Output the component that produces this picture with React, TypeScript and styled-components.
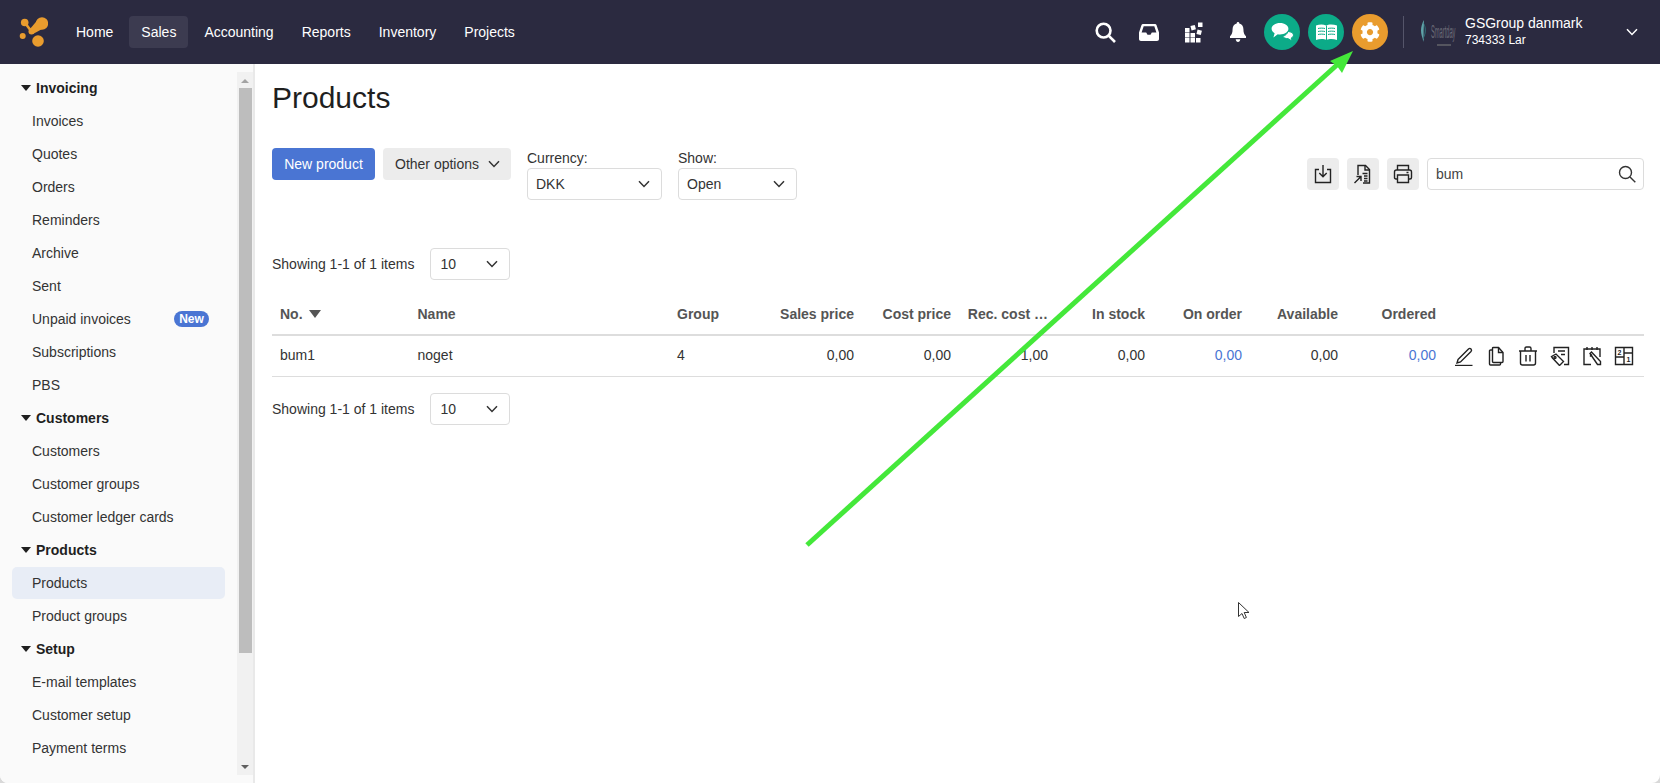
import styled, { createGlobalStyle } from "styled-components";
import { FaCog } from "react-icons/fa";

const GlobalStyle = createGlobalStyle`
  html, body {
    margin: 0;
    height: 100%;
    background: #d9d9d9;
    overflow: hidden;
  }
  body, button {
    font-family: "Liberation Sans", Arial, sans-serif;
    font-size: 14px;
    color: #333;
  }
`;

const COLUMNS = "137.5px 259.5px 96px 97px 97px 97px 97px 97px 96px 98px 1fr";

const navItems = ["Home", "Sales", "Accounting", "Reports", "Inventory", "Projects"];

const sideGroups = [
  {
    title: "Invoicing",
    items: ["Invoices", "Quotes", "Orders", "Reminders", "Archive", "Sent", "Unpaid invoices", "Subscriptions", "PBS"],
  },
  { title: "Customers", items: ["Customers", "Customer groups", "Customer ledger cards"] },
  { title: "Products", items: ["Products", "Product groups"] },
  { title: "Setup", items: ["E-mail templates", "Customer setup", "Payment terms"] },
];

const Chevron = ({ color = "#333" }: { color?: string }) => (
  <svg width="12" height="8" viewBox="0 0 12 8" fill="none">
    <path d="M1 1.2 6 6.4l5-5.2" stroke={color} strokeWidth="1.5" />
  </svg>
);

const Logo = () => (
  <svg width="30" height="30" viewBox="0 0 30 30" style={{ display: "block" }}>
    <g fill="#e99c2e">
      <circle cx="6.700" cy="5.500" r="3.800" />
      <circle cx="24" cy="6.500" r="6.200" />
      <circle cx="4.700" cy="19" r="3" />
      <circle cx="20" cy="24" r="5.800" />
      <circle cx="13.500" cy="14.500" r="3" />
      <path d="M6.700 5.500 13.500 14.500" stroke="#e99c2e" strokeWidth="2.600" />
      <path d="M20 2.500 26 11 15 17 11.500 12.500Z" />
    </g>
  </svg>
);

const SearchGlyph = () => (
  <svg width="21" height="21" viewBox="0 0 21 21" fill="none" stroke="#fff">
    <circle cx="8.600" cy="8.600" r="6.900" strokeWidth="2.600" />
    <path d="m13.600 13.600 6.400 6.400" strokeWidth="2.600" />
  </svg>
);

const InboxGlyph = () => (
  <svg width="20" height="17" viewBox="0 0 20 17">
    <path
      fill="#fff"
      fillRule="evenodd"
      d="M4 0h12c.8 0 1.200.4 1.500 1L20 8.500V15c0 1.200-.8 2-2 2H2c-1.200 0-2-.8-2-2V8.500L2.500 1C2.800.4 3.200 0 4 0Zm.7 2.200L2.600 8.400h4.600l1.300 2.300h3l1.300-2.300h4.600l-2.100-6.200Z"
    />
  </svg>
);

const BlocksGlyph = () => (
  <svg width="18" height="21" viewBox="0 0 18 21" fill="#fff">
    <rect x="0" y="6" width="4.500" height="4.500" />
    <rect x="0" y="11" width="4.500" height="4.500" />
    <rect x="5.500" y="11" width="4.500" height="4.500" />
    <rect x="0" y="16" width="4.500" height="4.500" />
    <rect x="5.500" y="16" width="4.500" height="4.500" />
    <rect x="11" y="16" width="4.500" height="4.500" />
    <rect x="6" y="3.500" width="4.500" height="4.500" transform="rotate(-15 8 6)" />
    <rect x="13" y="0.500" width="4.500" height="4.500" />
    <rect x="12" y="8" width="4.500" height="4.500" transform="rotate(15 14 10)" />
  </svg>
);

const BellGlyph = () => (
  <svg width="16" height="20" viewBox="0 0 16 20" fill="#fff">
    <path d="M8 0c.8 0 1.300.6 1.300 1.400C12 2 13.400 4.300 13.400 7c0 4 .9 5.500 2.600 7.300V16H0v-1.700C1.700 12.500 2.600 11 2.600 7c0-2.700 1.400-5 4.100-5.600C6.700.6 7.200 0 8 0Z" />
    <path d="M5.700 17.300h4.600C10.200 18.800 9.200 20 8 20s-2.200-1.200-2.300-2.700Z" />
  </svg>
);

const ChatGlyph = () => (
  <svg width="23" height="20" viewBox="0 0 23 20" fill="#fff">
    <path d="M9 1c4.700 0 8.400 2.500 8.400 5.800S13.700 12.500 9 12.500c-.8 0-1.500 0-2.200-.2L2.400 15.500l1.200-4.300C1.800 10.100.6 8.600.6 6.800.6 3.500 4.300 1 9 1Z" />
    <path
      stroke="#0cab88"
      strokeWidth="1"
      d="M17 9.500c3 .2 5.500 1.500 5.500 3.500 0 1.300-.9 2.300-2.300 3l1 3-4-2.300c-2.600 0-4.700-.9-5.400-2.400 2.400-.6 4.400-2.300 5.200-4.800Z"
    />
  </svg>
);

const BookGlyph = () => (
  <svg width="21" height="16" viewBox="0 0 21 16">
    <path fill="#fff" d="M0 1.500C3.500 0 7.500 0 10 1.500 12.500 0 17.500 0 21 1.500V16c-3.500-1.300-8-1.300-10.500 0-2.500-1.300-7-1.300-10.500 0Z" />
    <path
      fill="none"
      stroke="#0cab88"
      strokeWidth="1"
      d="M10.500 1.500V16M2 4.500c2.200-.5 4.800-.5 7 0M2 7.500c2.200-.5 4.800-.5 7 0M2 10.500c2.200-.5 4.800-.5 7 0M12 4.500c2.200-.5 4.800-.5 7 0M12 7.500c2.200-.5 4.800-.5 7 0M12 10.500c2.200-.5 4.800-.5 7 0"
    />
  </svg>
);

const CompanyLogo = () => (
  <svg width="38" height="36" viewBox="0 0 38 36">
    <g transform="translate(0 5)">
      <path d="M5 1C1 8 1 14 5 23 4 15 5 8 5 1Z" fill="#5fa3a8" />
      <path d="M4 3C7 9 6 16 3 22 8 15 8 8 4 3Z" fill="#2f6f78" />
    </g>
    <text x="0" y="0" fill="#6c6c78" fontSize="11" transform="translate(12 24) scale(.52 1.600)">
      Smartday
    </text>
    <rect x="18" y="30" width="14" height="2" fill="#55555f" />
  </svg>
);

const ToolIcon = styled.svg`
  width: 20px;
  height: 20px;
  display: block;
  fill: none;
  stroke: #222;
  stroke-width: 1.4;
`;

const DownloadIcon = () => (
  <ToolIcon viewBox="0 0 20 20">
    <path d="M6 5.500H2.500v13h15v-13H14" />
    <path d="M10 1v11.500M6.300 9 10 12.800 13.700 9" />
  </ToolIcon>
);

const ExportIcon = () => (
  <ToolIcon viewBox="0 0 20 20">
    <path d="M5 11V1.500h7.500l4 4V19H10" />
    <path d="M12 1.500V6h4.500" />
    <path d="M9.500 9.500h5M11 12h3.500M11 14.500h3.500M11 17h3.500" />
    <path d="M1.500 19 8 12.500M3.500 12.500H8V17" />
  </ToolIcon>
);

const PrintIcon = () => (
  <ToolIcon viewBox="0 0 20 20">
    <path d="M4.500 6V1.500h11V6" />
    <path d="M4.500 15H3c-1 0-1.500-.5-1.500-1.500V8c0-1.300.7-2 2-2h13c1.300 0 2 .7 2 2v5.500c0 1-.5 1.500-1.500 1.500h-1.500" />
    <path d="M4.500 11h11v7.500h-11zM13.500 8.500h2" />
  </ToolIcon>
);

const PencilIcon = () => (
  <ToolIcon viewBox="0 0 20 20">
    <path d="M4 13.500 14.500 3c.8-.8 1.800-.8 2.500 0s.7 1.700 0 2.500L6.500 16l-3.500 1z" />
    <path d="M1 19.500h17.500" />
  </ToolIcon>
);

const CopyIcon = () => (
  <ToolIcon viewBox="0 0 20 20">
    <path d="M6.500 2v13.500c0 .6.400 1 1 1H16c.6 0 1-.4 1-1V6.500L12.500 1.500h-5c-.6 0-1 .2-1 .5Z" />
    <path d="M12.500 1.500v5H17" />
    <path d="M6.500 4H4.500c-.6 0-1 .4-1 1v13c0 .6.400 1 1 1h9c.6 0 1-.4 1-1v-1.500" />
  </ToolIcon>
);

const TrashIcon = () => (
  <ToolIcon viewBox="0 0 20 20">
    <path d="M1 5h18M7 5V2.500C7 1.500 7.600 1 8.500 1h3c.9 0 1.500.5 1.500 1.500V5" />
    <path d="M2.500 5v12c0 1.300.8 2 2 2h11c1.200 0 2-.7 2-2V5" />
    <path d="M8 9v6.500M12 9v6.500" />
  </ToolIcon>
);

const TagDocIcon = () => (
  <ToolIcon viewBox="0 0 20 20">
    <path d="M4 7V1.500h14.500v17H14" />
    <path d="M8 5h7M11 8.500h4" />
    <path d="M1.500 10.500 6 8l7.500 7.500-4 4-7-7.500Z" />
    <circle cx="5" cy="11.500" r="1" />
  </ToolIcon>
);

const CalendarEditIcon = () => (
  <ToolIcon viewBox="0 0 20 20">
    <path d="M9 18.500H2V3h16v8" />
    <path d="M5 1v3M10 1v3M15 1v3" />
    <path d="M8 7.500 9.500 6l9 9.500v3h-3z" />
    <path d="m10 8.500-2 2" />
  </ToolIcon>
);

const NumberGrid = styled.text`
  font-size: 7px;
  font-weight: 700;
  fill: #222;
  stroke: none;
  font-family: "Liberation Sans", Arial, sans-serif;
`;

const GridIcon = () => (
  <ToolIcon viewBox="0 0 20 20">
    <path d="M1.500 1.500h17v17h-17zM10 1.500v17M1.500 11h8.500M10 7h8.500" />
    <NumberGrid x="3.400" y="8.600">2</NumberGrid>
    <NumberGrid x="12.400" y="16">1</NumberGrid>
  </ToolIcon>
);

const Page = styled.div`
  position: relative;
  height: 783px;
  display: flex;
  flex-direction: column;
  background: #fff;
  border-radius: 0 0 8px 8px;
  overflow: hidden;
`;

const TopBar = styled.header`
  flex: none;
  height: 64px;
  display: flex;
  align-items: center;
  background: #2b2a40;
  color: #fff;
`;

const LogoBox = styled.div`
  width: 30px;
  margin: 0 16px 0 18px;
`;

const TopNav = styled.nav`
  display: flex;
  align-items: center;
`;

const TopLink = styled.a<{ $active?: boolean }>`
  height: 32px;
  display: flex;
  align-items: center;
  padding: 0 12px;
  margin-right: 4px;
  border-radius: 4px;
  color: #fff;
  background: ${(p) => (p.$active ? "#3c3b50" : "transparent")};
`;

const TopRight = styled.div`
  margin-left: auto;
  display: flex;
  align-items: center;
`;

const GlyphBox = styled.div<{ $width: number; $gap?: number }>`
  width: ${(p) => p.$width}px;
  margin-right: ${(p) => p.$gap ?? 0}px;
  display: flex;
  justify-content: center;
  align-items: center;
`;

const RoundButton = styled.div<{ $color: string }>`
  width: 36px;
  height: 36px;
  border-radius: 50%;
  display: flex;
  align-items: center;
  justify-content: center;
  margin-right: 8px;
  background: ${(p) => p.$color};
`;

const Divider = styled.div`
  width: 1px;
  height: 32px;
  margin: 0 15px 0 7px;
  background: #55556a;
`;

const Company = styled.div`
  margin-left: 8px;
  display: flex;
  flex-direction: column;
  width: 161px;
  color: #fff;
`;

const CompanyName = styled.span`
  font-size: 14px;
  line-height: 17px;
`;

const CompanyUser = styled.span`
  font-size: 12px;
  line-height: 17px;
`;

const ChevronBox = styled.div`
  margin-right: 22px;
  display: flex;
`;

const Body = styled.div`
  flex: 1;
  display: flex;
  min-height: 0;
`;

const Sidebar = styled.aside`
  flex: none;
  width: 255px;
  box-sizing: border-box;
  padding: 8px 0;
  display: flex;
  background: #fafafa;
  border-right: 2px solid #e9e9e9;
`;

const SideNav = styled.nav`
  flex: 1;
  min-width: 0;
  overflow: hidden;
  margin-top: -1px;
`;

const GroupTitle = styled.div`
  height: 33px;
  display: flex;
  align-items: center;
  padding-left: 21px;
  gap: 5px;
  font-weight: 700;
  color: #1f1f1f;
`;

const Caret = styled.span`
  width: 0;
  height: 0;
  border-left: 5px solid transparent;
  border-right: 5px solid transparent;
  border-top: 6px solid #1f1f1f;
`;

const SideItemRow = styled.div`
  height: 33px;
  display: flex;
  align-items: center;
  padding: 0 12px;
`;

const SideItem = styled.a<{ $active?: boolean }>`
  flex: 1;
  height: 32px;
  display: flex;
  align-items: center;
  justify-content: space-between;
  padding: 0 16px 0 20px;
  border-radius: 5px;
  color: #333;
  background: ${(p) => (p.$active ? "#e8edf6" : "transparent")};
`;

const NewBadge = styled.span`
  width: 35px;
  height: 16px;
  border-radius: 8px;
  display: flex;
  align-items: center;
  justify-content: center;
  font-size: 12px;
  font-weight: 700;
  color: #fff;
  background: #4a75d3;
`;

const ScrollTrack = styled.div`
  flex: none;
  width: 16px;
  display: flex;
  flex-direction: column;
  align-items: center;
  background: #f1f1f1;
`;

const ScrollArrow = styled.span<{ $down?: boolean }>`
  flex: none;
  width: 0;
  height: 0;
  margin: ${(p) => (p.$down ? "auto 0 6px" : "7px 0 5px")};
  border-left: 4px solid transparent;
  border-right: 4px solid transparent;
  ${(p) => (p.$down ? "border-top: 4px solid #606060;" : "border-bottom: 4px solid #a3a3a3;")}
`;

const ScrollThumb = styled.div`
  flex: none;
  width: 13px;
  height: 565px;
  margin-left: 1px;
  background: #bdbdbd;
`;

const Main = styled.main`
  flex: 1;
  min-width: 0;
  padding: 16px 16px 0 17px;
`;

const Title = styled.h1`
  margin: 0;
  font-size: 30px;
  font-weight: 400;
  line-height: 36px;
  color: #1f1f1f;
`;

const Toolbar = styled.div`
  display: flex;
  align-items: flex-start;
  margin-top: 32px;
`;

const PrimaryButton = styled.button`
  height: 32px;
  width: 103px;
  padding: 0;
  border: 0;
  border-radius: 4px;
  color: #fff;
  background: #4a75d3;
`;

const OtherButton = styled.button`
  height: 32px;
  width: 128px;
  margin-left: 8px;
  padding: 0 11px 0 12px;
  border: 0;
  border-radius: 4px;
  display: flex;
  align-items: center;
  justify-content: space-between;
  color: #333;
  background: #ececec;
`;

const Field = styled.div<{ $width: number }>`
  width: ${(p) => p.$width}px;
  margin-left: 16px;
  padding-top: 2px;
`;

const FieldLabel = styled.div`
  height: 18px;
  line-height: 16px;
`;

const SelectBox = styled.div<{ $width?: number; $inset?: number }>`
  box-sizing: border-box;
  height: 32px;
  width: ${(p) => (p.$width ? `${p.$width}px` : "100%")};
  display: flex;
  align-items: center;
  justify-content: space-between;
  padding: 0 11px 0 ${(p) => p.$inset ?? 8}px;
  border: 1px solid #dcdcdc;
  border-radius: 4px;
  background: #fff;
`;

const ToolRight = styled.div`
  margin-left: auto;
  padding-top: 10px;
  display: flex;
  gap: 8px;
`;

const IconButton = styled.div`
  width: 32px;
  height: 32px;
  border-radius: 4px;
  display: flex;
  align-items: center;
  justify-content: center;
  background: #ececec;
`;

const SearchBox = styled.div`
  box-sizing: border-box;
  width: 217px;
  height: 32px;
  display: flex;
  align-items: center;
  justify-content: space-between;
  padding: 0 7px 0 8px;
  border: 1px solid #dcdcdc;
  border-radius: 4px;
  color: #444;
`;

const Pager = styled.div<{ $top: number }>`
  margin-top: ${(p) => p.$top}px;
  display: flex;
  align-items: center;
  gap: 16px;
`;

const TableHead = styled.div`
  margin-top: 14px;
  height: 40px;
  display: grid;
  grid-template-columns: ${COLUMNS};
  align-items: center;
  border-bottom: 2px solid #dddddd;
  font-weight: 700;
  color: #555;
`;

const TableRow = styled.div`
  box-sizing: border-box;
  height: 41px;
  padding-bottom: 2px;
  display: grid;
  grid-template-columns: ${COLUMNS};
  align-items: center;
  border-bottom: 1px solid #dddddd;
`;

const Cell = styled.div<{ $right?: boolean; $link?: boolean }>`
  padding: 0 8px;
  white-space: nowrap;
  text-align: ${(p) => (p.$right ? "right" : "left")};
  color: ${(p) => (p.$link ? "#4a75d3" : "inherit")};
`;

const SortCaret = styled.span`
  display: inline-block;
  margin-left: 6px;
  vertical-align: 1px;
  border-left: 6px solid transparent;
  border-right: 6px solid transparent;
  border-top: 8px solid #555;
`;

const Actions = styled.div`
  display: flex;
  align-items: center;
  gap: 12px;
  padding: 2px 0 0 10px;
`;

const Overlay = styled.svg`
  position: absolute;
  inset: 0;
  pointer-events: none;
`;

const App = () => {
  return (
    <>
      <GlobalStyle />
      <Page>
        <TopBar>
          <LogoBox>
            <Logo />
          </LogoBox>
          <TopNav>
            {navItems.map((item) => (
              <TopLink key={item} $active={item === "Sales"}>
                {item}
              </TopLink>
            ))}
          </TopNav>
          <TopRight>
            <GlyphBox $width={44}>
              <SearchGlyph />
            </GlyphBox>
            <GlyphBox $width={44}>
              <InboxGlyph />
            </GlyphBox>
            <GlyphBox $width={45}>
              <BlocksGlyph />
            </GlyphBox>
            <GlyphBox $width={44} $gap={4}>
              <BellGlyph />
            </GlyphBox>
            <RoundButton $color="#0cab88">
              <ChatGlyph />
            </RoundButton>
            <RoundButton $color="#0cab88">
              <BookGlyph />
            </RoundButton>
            <RoundButton $color="#e99c2e">
              <FaCog size={20} color="#fff" />
            </RoundButton>
            <Divider />
            <CompanyLogo />
            <Company>
              <CompanyName>GSGroup danmark</CompanyName>
              <CompanyUser>734333 Lar</CompanyUser>
            </Company>
            <ChevronBox>
              <Chevron color="#fff" />
            </ChevronBox>
          </TopRight>
        </TopBar>
        <Body>
          <Sidebar>
            <SideNav>
              {sideGroups.map((group) => (
                <div key={group.title}>
                  <GroupTitle>
                    <Caret />
                    {group.title}
                  </GroupTitle>
                  {group.items.map((item) => (
                    <SideItemRow key={item}>
                      <SideItem $active={group.title === "Products" && item === "Products"}>
                        {item}
                        {item === "Unpaid invoices" && <NewBadge>New</NewBadge>}
                      </SideItem>
                    </SideItemRow>
                  ))}
                </div>
              ))}
            </SideNav>
            <ScrollTrack>
              <ScrollArrow />
              <ScrollThumb />
              <ScrollArrow $down />
            </ScrollTrack>
          </Sidebar>
          <Main>
            <Title>Products</Title>
            <Toolbar>
              <PrimaryButton>New product</PrimaryButton>
              <OtherButton>
                Other options
                <Chevron />
              </OtherButton>
              <Field $width={135}>
                <FieldLabel>Currency:</FieldLabel>
                <SelectBox>
                  DKK
                  <Chevron />
                </SelectBox>
              </Field>
              <Field $width={119}>
                <FieldLabel>Show:</FieldLabel>
                <SelectBox>
                  Open
                  <Chevron />
                </SelectBox>
              </Field>
              <ToolRight>
                <IconButton>
                  <DownloadIcon />
                </IconButton>
                <IconButton>
                  <ExportIcon />
                </IconButton>
                <IconButton>
                  <PrintIcon />
                </IconButton>
                <SearchBox>
                  bum
                  <svg width="18" height="18" viewBox="0 0 18 18" fill="none" stroke="#333" strokeWidth="1.4">
                    <circle cx="7.500" cy="7.500" r="6" />
                    <path d="m12 12 5.300 5.300" />
                  </svg>
                </SearchBox>
              </ToolRight>
            </Toolbar>
            <Pager $top={48}>
              Showing 1-1 of 1 items
              <SelectBox $width={80} $inset={9}>
                10
                <Chevron />
              </SelectBox>
            </Pager>
            <TableHead>
              <Cell>
                No.
                <SortCaret />
              </Cell>
              <Cell>Name</Cell>
              <Cell>Group</Cell>
              <Cell $right>Sales price</Cell>
              <Cell $right>Cost price</Cell>
              <Cell $right>Rec. cost …</Cell>
              <Cell $right>In stock</Cell>
              <Cell $right>On order</Cell>
              <Cell $right>Available</Cell>
              <Cell $right>Ordered</Cell>
            </TableHead>
            <TableRow>
              <Cell>bum1</Cell>
              <Cell>noget</Cell>
              <Cell>4</Cell>
              <Cell $right>0,00</Cell>
              <Cell $right>0,00</Cell>
              <Cell $right>1,00</Cell>
              <Cell $right>0,00</Cell>
              <Cell $right $link>
                0,00
              </Cell>
              <Cell $right>0,00</Cell>
              <Cell $right $link>
                0,00
              </Cell>
              <Actions>
                <PencilIcon />
                <CopyIcon />
                <TrashIcon />
                <TagDocIcon />
                <CalendarEditIcon />
                <GridIcon />
              </Actions>
            </TableRow>
            <Pager $top={16}>
              Showing 1-1 of 1 items
              <SelectBox $width={80} $inset={9}>
                10
                <Chevron />
              </SelectBox>
            </Pager>
          </Main>
        </Body>
        {/* annotation arrow and mouse pointer sit over the page */}
        <Overlay width="1660" height="783" viewBox="0 0 1660 783">
          <path d="M807 545 1338 64" stroke="#44e83a" strokeWidth="5" fill="none" />
          <path d="M1353 51 1330 61 1337 66 1342 73Z" fill="#44e83a" />
          <path
            d="M1238.500 602.500v14l3.500-3 2.200 5 2.200-1-2.200-5h4.800Z"
            fill="#fff"
            stroke="#333"
            strokeWidth="1"
          />
        </Overlay>
      </Page>
    </>
  );
};

export default App;
